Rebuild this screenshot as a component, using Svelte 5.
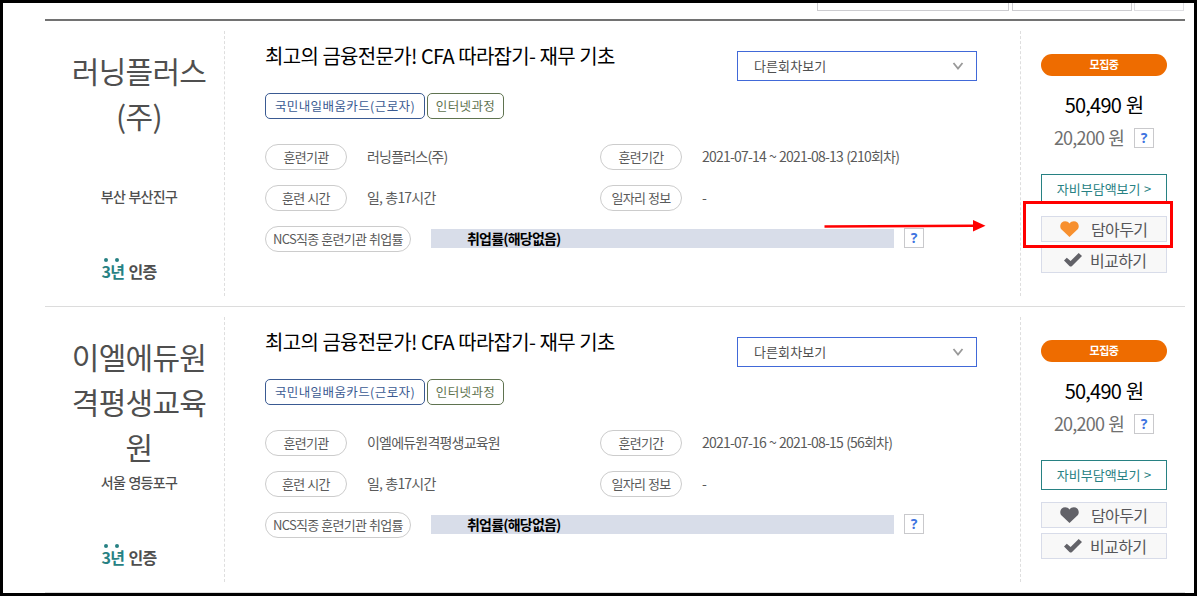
<script lang="ts">
  interface Course {
    company: string;
    region: string;
    title: string;
    period: string;
    hours: string;
    price: string;
    ownCost: string;
    saved: boolean;
  }

  const courses: Course[] = [
    {
      company: '러닝플러스(주)',
      region: '부산 부산진구',
      title: '최고의 금융전문가! CFA 따라잡기- 재무 기초',
      period: '2021-07-14 ~ 2021-08-13 (210회차)',
      hours: '일, 총17시간',
      price: '50,490 원',
      ownCost: '20,200 원',
      saved: true,
    },
    {
      company: '이엘에듀원격평생교육원',
      region: '서울 영등포구',
      title: '최고의 금융전문가! CFA 따라잡기- 재무 기초',
      period: '2021-07-16 ~ 2021-08-15 (56회차)',
      hours: '일, 총17시간',
      price: '50,490 원',
      ownCost: '20,200 원',
      saved: false,
    },
  ];
</script>

<div class="frame">
  <div class="toolbar">
    <span class="field wide"></span>
    <span class="field"></span>
    <span class="field small"></span>
  </div>

  <ul class="list">
    {#each courses as course}
      <li class="row">
        <div class="org">
          <p class="company">{course.company}</p>
          <p class="region">{course.region}</p>
          <p class="cert"><em><i>3</i><i>년</i></em> 인증</p>
        </div>

        <div class="info">
          <div class="head">
            <div>
              <h3>{course.title}</h3>
              <div class="tags">
                <span class="tag blue">국민내일배움카드(근로자)</span>
                <span class="tag green">인터넷과정</span>
              </div>
            </div>
            <button class="select">
              <span>다른회차보기</span>
              <svg width="12" height="8" viewBox="0 0 12 8"><path d="M1.5 1 L6 6.500 L10.500 1" /></svg>
            </button>
          </div>
          <dl class="specs">
            <dt>훈련기관</dt>
            <dd>{course.company}</dd>
            <dt>훈련기간</dt>
            <dd>{course.period}</dd>
            <dt>훈련 시간</dt>
            <dd>{course.hours}</dd>
            <dt>일자리 정보</dt>
            <dd>-</dd>
          </dl>
          <div class="rate">
            <span class="pill">NCS직종 훈련기관 취업률</span>
            <div class="bar">취업률(해당없음)</div>
            <button class="help">?</button>
          </div>
        </div>

        <div class="side">
          <span class="status">모집중</span>
          <p class="price">{course.price}</p>
          <p class="own"><span>{course.ownCost}</span><button class="help">?</button></p>
          <button class="cost">자비부담액보기 &gt;</button>
          <button class="action keep" class:saved={course.saved}>
            <svg width="19" height="16" viewBox="0 0 19 16">
              <path d="M9.500 16 L1.600 8.600 C-0.400 6.500 0 3 1.800 1.400 C4 -0.500 7.800 -0.200 9.500 2.600 C11.200 -0.200 15 -0.500 17.200 1.400 C19 3 19.400 6.500 17.400 8.600 Z" />
            </svg>
            <span>담아두기</span>
          </button>
          <button class="action compare">
            <svg width="18" height="14" viewBox="0 0 18 14"><path d="M0 7.500 L2.800 4.700 L6.600 8 L14.700 0 L18 3 L8 13 Q6.700 14 5.400 13 Z" /></svg>
            <span>비교하기</span>
          </button>
          {#if course.saved}
            <div class="marker"></div>
            <svg class="arrow" width="162" height="14" viewBox="0 0 162 14">
              <path d="M0.500 7.500 L150 6.700" />
              <polygon points="149,1 161.500,6.700 149,12.500" />
            </svg>
          {/if}
        </div>
      </li>
    {/each}
  </ul>
</div>

<style>
  :global(body) {
    background: #fff;
  }

  .frame {
    box-sizing: border-box;
    width: 1197px;
    height: 596px;
    border: 3px solid #000;
    overflow: hidden;
    background: #fff;
    color: #4f4f4f;
    font-family: 'Noto Sans CJK KR', sans-serif;
  }

  .frame * {
    box-sizing: border-box;
  }

  p, h3, ul, dl, dd {
    margin: 0;
    padding: 0;
  }

  button {
    padding: 0;
    font-family: inherit;
    color: inherit;
    background: #fff;
  }

  .toolbar {
    display: flex;
    gap: 3px;
    width: 1182px;
    height: 16px;
    padding-bottom: 8px;
    justify-content: flex-end;
  }

  .field {
    width: 120px;
    border: 1px solid #ccccd0;
    border-top: 0;
  }

  .field.wide {
    width: 192px;
  }

  .field.small {
    width: 50px;
    margin-left: -1px;
    margin-right: 1px;
    border-color: #dedee2;
  }

  .list {
    list-style: none;
    width: 1140px;
    margin-left: 42px;
    border-top: 2px solid #727272;
  }

  .row {
    display: grid;
    grid-template-columns: 180px 796px 1fr;
    height: 286px;
    padding: 10px 0;
    border-bottom: 1px solid #dcdcdc;
  }

  .org {
    border-right: 1px dashed #dedede;
    padding: 17px 20px 0 28px;
    text-align: center;
  }

  .company {
    width: 140px;
    margin-left: -4px;
    height: 135px;
    font-size: 30px;
    line-height: 45px;
    letter-spacing: -0.7px;
    word-break: break-all;
  }

  .region {
    margin-top: 3px;
    margin-left: -8px;
    width: 148px;
    font-size: 14px;
    line-height: 20px;
    letter-spacing: -0.7px;
    word-spacing: 0.8px;
    font-weight: 500;
  }

  .cert {
    margin-top: 55px;
    margin-right: 19px;
    font-size: 16px;
    line-height: 20px;
    letter-spacing: -0.6px;
    word-spacing: 1px;
    font-weight: 700;
  }

  .cert em {
    color: #278183;
    font-style: normal;
  }

  .cert i {
    position: relative;
    font-style: normal;
  }

  .cert i::before {
    content: '';
    position: absolute;
    top: -1px;
    left: 50%;
    width: 4px;
    height: 4px;
    margin-left: -2px;
    border-radius: 50%;
    background: #278183;
  }

  .info {
    padding: 9px 43px 0 40px;
    border-right: 1px dashed #dedede;
  }

  .head {
    display: flex;
    justify-content: space-between;
    height: 104px;
  }

  h3 {
    margin-bottom: 21px;
    color: #000;
    font-size: 20px;
    line-height: 32px;
    font-weight: 400;
    letter-spacing: -0.7px;
    word-spacing: 0.5px;
    white-space: nowrap;
  }

  .tags {
    display: flex;
    gap: 2px;
  }

  .tag {
    height: 26px;
    border: 1px solid;
    border-radius: 5px;
    width: 160px;
    text-align: center;
    font-size: 12.5px;
    line-height: 24px;
    letter-spacing: 0.4px;
    white-space: nowrap;
  }

  .tag.blue {
    color: #3a5a92;
  }

  .tag.green {
    width: 77px;
    color: #5f7350;
  }

  .select {
    display: flex;
    align-items: center;
    justify-content: space-between;
    width: 240px;
    height: 30px;
    margin-top: 11px;
    padding: 0 12px 0 16px;
    border: 1px solid #4169d8;
    font-size: 13px;
    line-height: 26px;
    letter-spacing: 0.1px;
  }

  .select span {
    padding-bottom: 1px;
  }

  .select svg {
    fill: none;
    stroke: #999;
    stroke-width: 1.8;
  }

  .specs {
    display: grid;
    grid-template-columns: 82px 253px 82px 1fr;
    row-gap: 15px;
  }

  dt, .pill {
    height: 26px;
    border: 1px solid #ccc;
    border-radius: 13px;
    text-align: center;
    font-size: 13px;
    line-height: 23px;
    letter-spacing: -0.7px;
    word-spacing: 0.5px;
    color: #5a5a5a;
  }

  dd {
    padding-left: 20px;
    font-size: 14px;
    line-height: 24px;
    letter-spacing: -0.8px;
    word-spacing: 0.8px;
    color: #5a5a5a;
  }

  .rate {
    display: flex;
    align-items: flex-start;
    margin-top: 15px;
  }

  .pill {
    width: 146px;
  }

  .bar {
    width: 463px;
    height: 19px;
    margin-top: 3px;
    margin-left: 20px;
    padding-left: 36px;
    background: #d8dde9;
    color: #000;
    font-size: 14px;
    line-height: 18px;
    font-weight: 700;
    letter-spacing: -0.8px;
  }

  .help {
    width: 20px;
    height: 20px;
    border: 1px solid #c9c9cc;
    color: #4074e0;
    font-family: 'Open Sans', sans-serif;
    font-size: 14px;
    line-height: 18px;
    font-weight: 700;
  }

  .rate .help {
    margin-top: 2px;
    margin-left: 10px;
  }

  .side {
    position: relative;
    display: flex;
    flex-direction: column;
    width: 126px;
    margin-left: 20px;
    padding-top: 23px;
  }

  .status {
    height: 22px;
    border-radius: 11px;
    background: #ee6c00;
    color: #fff;
    text-align: center;
    font-size: 11px;
    line-height: 21px;
    font-weight: 700;
    letter-spacing: -0.5px;
  }

  .price {
    margin-top: 14px;
    color: #000;
    text-align: center;
    font-size: 20px;
    line-height: 30px;
    letter-spacing: -0.8px;
    word-spacing: 1px;
  }

  .own {
    display: flex;
    align-items: center;
    justify-content: center;
    gap: 10px;
    height: 30px;
    margin: 3px 0 21px;
    color: #707070;
    font-size: 18px;
    line-height: 30px;
    letter-spacing: -0.8px;
    word-spacing: 1px;
  }

  .own span {
    padding-bottom: 2px;
  }

  .own .help {
    letter-spacing: 0;
  }

  .cost {
    height: 30px;
    margin-bottom: 12px;
    padding-bottom: 2px;
    border: 1px solid #278183;
    color: #278183;
    font-size: 13px;
    letter-spacing: 0;
    word-spacing: 0.5px;
  }

  .action {
    display: flex;
    align-items: center;
    height: 26px;
    margin-bottom: 5px;
    border: 1px solid #d8dce9;
    background: #f8f8f8;
    color: #56565a;
    font-size: 16px;
    line-height: 24px;
    letter-spacing: -0.6px;
  }

  .action svg {
    flex: none;
    fill: #626268;
  }

  .keep {
    padding-left: 18px;
    gap: 12px;
  }

  .compare {
    padding-left: 22px;
    gap: 8px;
  }

  .saved svg {
    fill: #f7902f;
  }

  .marker {
    position: absolute;
    top: 170px;
    left: -18px;
    width: 150px;
    height: 47px;
    border: 3px solid #f00;
  }

  .arrow {
    position: absolute;
    top: 188px;
    left: -217px;
    fill: #f00;
  }

  .arrow path {
    stroke: #f00;
    stroke-width: 2.6;
  }
</style>
